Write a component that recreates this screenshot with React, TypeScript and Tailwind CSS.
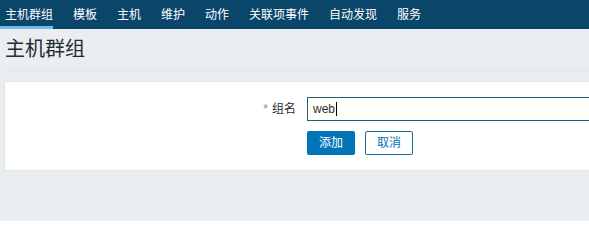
import React from "react";

const navItems = ["主机群组", "模板", "主机", "维护", "动作", "关联项事件", "自动发现", "服务"];

export default function App() {
  return (
    <div
      className="w-[589px] h-[221px] overflow-hidden bg-[#ebeef0] text-[#1f2c33]"
      style={{ fontFamily: '"Liberation Sans", Arial, "Noto Sans CJK SC", sans-serif' }}
    >
      <nav className="h-[29px] bg-[#0a466a] flex items-stretch pl-[5px] gap-[20px]">
        {navItems.map((t, i) => (
          <div
            key={t}
            className={
              "flex items-center text-[12px] leading-none text-white " +
              (i === 0 ? "border-b-[3px] border-[#71bbee] pt-[3px] -ml-[5px] pl-[5px]" : "")
            }
          >
            {t}
          </div>
        ))}
      </nav>
      <div className="h-[41px] flex items-center pl-[5px] pb-[2px]">
        <h1 className="text-[20px] leading-none font-normal text-[#1f2c33]">主机群组</h1>
      </div>
      <div className="ml-[8px] border-t border-[#dfe4e7]" />
      <div className="h-[10px]" />
      <div className="ml-[4px] w-[620px] bg-white border border-[#dfe4e7] h-[90px] pt-[15px]">
        <div className="flex items-center">
          <div className="w-[291px] text-right text-[12px] pr-0">
            <span className="text-[#768d99] mr-[4px]">*</span>
            <span className="text-[#1f2c33]">组名</span>
          </div>
          <div className="ml-[11px] flex-1 h-[24px] border border-[#1f5b7a] bg-[#fffffa] flex items-center pl-[5px] text-[12px]">
            web<span className="inline-block w-px h-[14px] bg-black ml-px" />
          </div>
        </div>
        <div className="flex ml-[302px] mt-[10px] gap-[10px]">
          <button className="w-[48px] h-[24px] bg-[#0275b8] text-white text-[12px] rounded-[2px]">添加</button>
          <button className="w-[48px] h-[24px] bg-white border border-[#1a6a92] text-[#0275b8] text-[12px] rounded-[2px]">取消</button>
        </div>
      </div>
    </div>
  );
}
